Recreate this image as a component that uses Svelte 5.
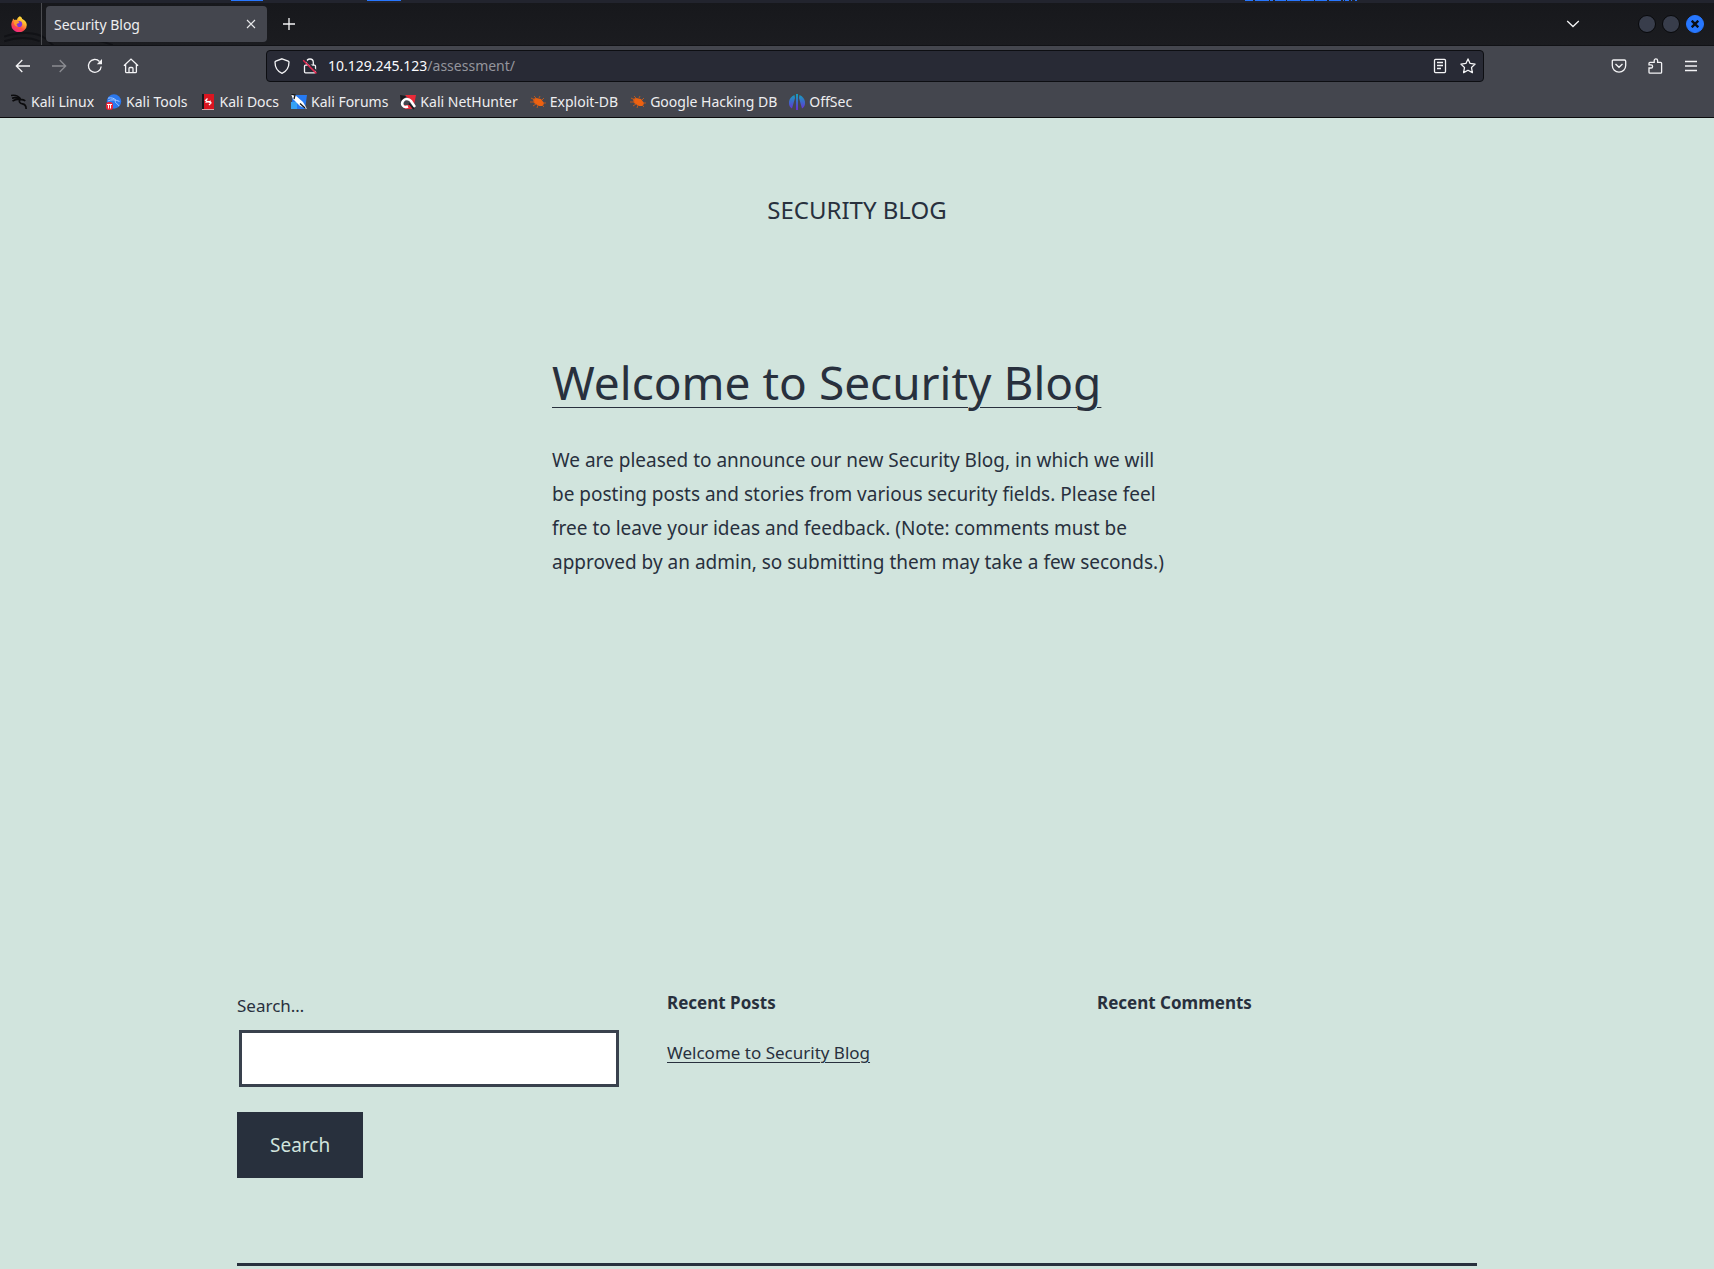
<script>
  const bookmarks = [
    { label: 'Kali Linux', icon: 'dragon' },
    { label: 'Kali Tools', icon: 'tools' },
    { label: 'Kali Docs', icon: 'docs' },
    { label: 'Kali Forums', icon: 'forums' },
    { label: 'Kali NetHunter', icon: 'nethunter' },
    { label: 'Exploit-DB', icon: 'bug' },
    { label: 'Google Hacking DB', icon: 'bug' },
    { label: 'OffSec', icon: 'offsec' }
  ];
  let query = $state('');
  let address = $state('10.129.245.123/assessment/');
  let host = $derived(address.split('/')[0]);
  let path = $derived(address.slice(host.length));
</script>

<div class="browser">
  <header class="chrome">
    <div class="desktop-strip" aria-hidden="true">
      <svg width="100%" height="3">
        <rect width="100%" height="3" fill="#22242e" />
        <path fill="#2777ff" d="M231 0h32v1h-32zM367 0h34v1h-34zM1245 0h8v1h-8zM1255 0h14v1h-14zM1270 0h3v1h-3zM1275 0h11v1h-11zM1287 0h13v1h-13zM1301 0h13v1h-13zM1315 0h12v1h-12zM1329 0h12v1h-12zM1343 0h1v1h-1zM1345 0h4v1h-4zM1351 0h1v1h-1zM1355 0h2v1h-2z" />
      </svg>
    </div>
    <div class="tabs">
      <div class="brand">
        <svg width="16" height="16" viewBox="0 0 16 16" aria-hidden="true">
          <defs>
            <linearGradient id="fx" x1=".8" y1="0" x2=".25" y2="1">
              <stop offset="0" stop-color="#fff04a" /><stop offset=".35" stop-color="#ffb62c" />
              <stop offset=".65" stop-color="#ff5040" /><stop offset="1" stop-color="#f0218e" />
            </linearGradient>
          </defs>
          <path fill="url(#fx)" d="M8.8.2c1.400.6 2 1.500 2.400 2.700C12.800 3.500 15.800 5.600 15.800 9A7.700 7.200 0 0 1 .3 9C.2 6.800 1.200 5.200 1.700 4.300L2 2.400 3.500 4.100C4.600 3.700 5.500 3.700 6 4 6.200 2.200 7.300 1 8.800.2z" />
          <circle cx="8.100" cy="8" r="3.100" fill="#8235dc" />
          <path fill="#ff9a2c" d="M3 5.200C4.700 3.900 6.500 4.600 8.400 6L7.900 7.100 6 7.800C5 8.900 6 10 7.400 10.200 4.800 11.400 2.400 8.500 3 5.200z" />
        </svg>
      </div>
      <div class="tab">
        <span>Security Blog</span>
        <button class="icon close-tab" aria-label="Close tab">
          <svg width="10" height="10" viewBox="0 0 10 10"><path d="M1 1l8 8M9 1L1 9" stroke="#e8e8ea" stroke-width="1.100" /></svg>
        </button>
      </div>
      <button class="icon new-tab" aria-label="New tab">
        <svg width="12" height="12" viewBox="0 0 12 12"><path d="M6 0v12M0 6h12" stroke="#f4f4f6" stroke-width="1.300" /></svg>
      </button>
      <div class="window">
        <button class="icon all-tabs" aria-label="List all tabs">
          <svg width="14" height="8" viewBox="0 0 14 8"><path d="M1.200 1L7 6.500 12.800 1" fill="none" stroke="#f4f4f6" stroke-width="1.300" /></svg>
        </button>
        <button class="dot" aria-label="Minimize"></button>
        <button class="dot" aria-label="Maximize"></button>
        <button class="dot shut" aria-label="Close window">
          <svg width="8" height="8" viewBox="0 0 8 8"><path d="M.7.7l6.600 6.600M7.300.7L.7 7.300" stroke="#0a0d16" stroke-width="2.400" /></svg>
        </button>
      </div>
      <svg class="swirl" width="130" height="46" viewBox="0 0 130 46" aria-hidden="true">
        <path d="M0 37C14 32 34 31 44 39l9 8M0 42c12-4 26-5 38 0M84 40c12 0 22 2 32 6" fill="none" stroke="#111216" stroke-width="2" />
      </svg>
    </div>

    <nav class="toolbar" aria-label="Navigation">
      <div class="nav-buttons">
        <button class="icon" aria-label="Back">
          <svg width="16" height="16" viewBox="0 0 16 16"><path d="M15 8H1.500M7.300 2L1.300 8l6 6" /></svg>
        </button>
        <button class="icon faded" aria-label="Forward">
          <svg width="16" height="16" viewBox="0 0 16 16"><path d="M1 8h13.500M8.700 2l6 6-6 6" /></svg>
        </button>
        <button class="icon" aria-label="Reload">
          <svg width="16" height="16" viewBox="0 0 16 16"><path d="M14.200 8.500A6.400 6.400 0 1 1 12.500 3.500" /><path class="solid" d="M15 1v5.200H9.800z" /></svg>
        </button>
        <button class="icon" aria-label="Home">
          <svg width="16" height="16" viewBox="0 0 16 16"><path d="M.9 7.800L8 1.100l7.100 6.700M2.600 6.500v7.200c0 .7.300 1 1 1h8.800c.7 0 1-.3 1-1V6.500M6 14.500v-4c0-.7.300-1 1-1h2c.7 0 1 .3 1 1v4" /></svg>
        </button>
      </div>

      <div class="urlbar">
        <div class="badges">
          <button class="icon" aria-label="Tracking protection">
            <svg width="16" height="16" viewBox="0 0 16 16"><path d="M8 .8l6.200 2.300c.5.200.8.500.8 1C15 9.500 12.500 13.500 8 15.300 3.500 13.500 1 9.500 1 4.100c0-.5.300-.8.800-1z" /></svg>
          </button>
          <button class="icon" aria-label="Connection not secure">
            <svg width="16" height="16" viewBox="0 0 16 16"><path d="M4.700 7V4.300a3.300 3.300 0 0 1 6.600 0V7M3.500 7.200h9c.7 0 1 .3 1 1v5.600c0 .7-.3 1-1 1h-9c-.7 0-1-.3-1-1V8.200c0-.7.300-1 1-1z" /><path class="gap" d="M3 1.500l12 12" /><path class="slash" d="M1.200 2.200L14.400 15.400" /></svg>
          </button>
        </div>
        <label class="address">
          <span class="address-text" aria-hidden="true"><b>{host}</b>{path}</span>
          <input type="text" bind:value={address} aria-label="Address" />
        </label>
        <div class="badges">
          <button class="icon" aria-label="Reader view">
            <svg width="16" height="16" viewBox="0 0 16 16"><path d="M3.500 1.400h9c.7 0 1 .3 1 1v11.200c0 .7-.3 1-1 1h-9c-.7 0-1-.3-1-1V2.400c0-.7.300-1 1-1zM5 4.500h6M5 7.500h6M5 10.500h4" /></svg>
          </button>
          <button class="icon" aria-label="Bookmark this page">
            <svg width="16" height="16" viewBox="0 0 16 16"><path stroke-linejoin="round" d="M8 .9l2.100 4.500 5 .7-3.600 3.400.9 5.100L8 12.200l-4.400 2.400.9-5.100L.9 6.100l5-.7z" /></svg>
          </button>
        </div>
      </div>

      <div class="actions">
        <button class="icon" aria-label="Save to Pocket">
          <svg width="16" height="16" viewBox="0 0 16 16"><path d="M2.500 2h11c.8 0 1.200.4 1.200 1.200V7.500a6.700 6.700 0 0 1-13.400 0V3.200C1.300 2.400 1.700 2 2.500 2zM4.500 6l3.500 3.300L11.500 6" /></svg>
        </button>
        <button class="icon" aria-label="Extensions">
          <svg width="16" height="16" viewBox="0 0 16 16"><path d="M2 10h2a1.600 1.600 0 0 0 0-3.200H2V5.300c0-.7.300-1 1-1h4.200V2.600a1.700 1.700 0 0 1 3.400 0v1.700h3c.7 0 1 .3 1 1v8.900c0 .6-.3.900-1 .9H3c-.7 0-1-.3-1-.9z" /></svg>
        </button>
        <button class="icon" aria-label="Open application menu">
          <svg width="16" height="16" viewBox="0 0 16 16"><path d="M2 3.500h12M2 8h12M2 12.500h12" /></svg>
        </button>
      </div>
    </nav>

    <nav class="bookmarks" aria-label="Bookmarks">
      {#each bookmarks as b}
        <a href="#top">
          <svg width="16" height="16" viewBox="0 0 16 16" aria-hidden="true">
            {#if b.icon === 'dragon'}
              <path d="M0 1.500c4-.8 7.500.6 9.500 3.300M1 4.200c3-.9 6-.4 8.500 1M1.500 7C4 5.500 7 5 9.500 5.300c2 .2 3.500.5 4.800 1.500M9 5.300C7.500 7.800 9 9.500 11.500 9.800c2.500.4 3.700 2 3.600 5.200" fill="none" stroke="#0b0b0d" stroke-width="1.700" />
            {:else if b.icon === 'tools'}
              <circle cx="8" cy="7.500" r="7.200" fill="#2b78ee" />
              <path d="M2 4.200c3.500-1 6.500.2 8 2.200M2 7c3-1.800 7-1.400 11.500.4M9.500 6.500c-1 3 2 2.700 3.500 5.500" fill="none" stroke="#a9ccff" stroke-width="1" />
              <rect y="8" width="7" height="8" rx="3" fill="#ee2636" />
              <path d="M1 10.500h5M2.500 10.500v4M4.500 10.500v4" stroke="#fff" stroke-width="1" />
            {:else if b.icon === 'docs'}
              <path d="M2 0h12v16H2z" fill="#db1520" /><path d="M2 0h2v15H2z" fill="#16181d" />
              <path d="M2 15h12v1H2z" fill="#d9a6a8" />
              <path d="M7.500 4.500L5.500 6.500 8 8l3-1M5.500 8.500L8 7.500l3 1.500-2 2" fill="none" stroke="#fff" stroke-width="1.200" />
            {:else if b.icon === 'forums'}
              <path d="M2 1h14l-2 14H0z" fill="#267af2" /><path d="M0 8h6v7H0z" fill="#35a1f4" />
              <path d="M0 0l4 1 8 7 4 7-7-3-7-7z" fill="#fff" />
              <path d="M0 0l4 1-1 4M9 9.500l5 4.500" fill="none" stroke="#17191e" stroke-width="1.400" />
            {:else if b.icon === 'nethunter'}
              <path d="M5 1h11l-2 10-6-7z" fill="#e92a38" /><path d="M0 1l6 1-5 8z" fill="#17191e" />
              <path d="M5 15l-3-4h9l1 4z" fill="#e92a38" />
              <path d="M8 12.500C3 14.500 1 10 3 7c2-3 6-2.500 8 0l4 6" fill="none" stroke="#fff" stroke-width="2.600" />
              <path d="M9 9.500l5 5.500" stroke="#17191e" stroke-width="1.500" />
            {:else if b.icon === 'bug'}
              <path d="M3 5l3-1 5 1 3 4-1 3-4 0-5-3z" fill="#ed6110" />
              <path d="M1 4l4 2M4 2l2 2M9 4l1-2M0 8l5 0M3 12l3-2M7 14l1-3M12 6l2-2M13 9l3 0M12 11l2 2" stroke="#c65a1c" stroke-width=".9" />
            {:else}
              <defs><linearGradient id="os" x1="0" y1="0" x2="0" y2="1"><stop stop-color="#12a4bd" /><stop offset="1" stop-color="#6a2bd6" /></linearGradient></defs>
              <path fill="url(#os)" d="M5.500 1C-2 4-1 13 3 14.500L6 4zM7 0h2v16H7zM10.500 1C18 4 17 13 13 14.500L10 4z" />
            {/if}
          </svg>
          <span>{b.label}</span>
        </a>
      {/each}
    </nav>
  </header>

  <div class="page" id="top">
    <div class="site-header"><a href="#top">Security Blog</a></div>
    <main>
      <h1><a href="#top">Welcome to Security Blog</a></h1>
      <p>
        We are pleased to announce our new Security Blog, in which we will be posting posts and
        stories from various security fields. Please feel free to leave your ideas and feedback.
        (Note: comments must be approved by an admin, so submitting them may take a few seconds.)
      </p>
    </main>
    <aside class="widgets">
      <form onsubmit={(e) => e.preventDefault()}>
        <label for="search">Search…</label>
        <input id="search" type="search" bind:value={query} />
        <button type="submit">Search</button>
      </form>
      <section>
        <h2>Recent Posts</h2>
        <ul><li><a href="#top">Welcome to Security Blog</a></li></ul>
      </section>
      <section>
        <h2>Recent Comments</h2>
      </section>
    </aside>
    <footer></footer>
  </div>
</div>

<style>
  :global(body) {
    background: #d1e4dd;
  }
  .browser {
    font-family: 'Noto Sans', sans-serif;
    color: #28303d;
  }
  button,
  input {
    font: inherit;
    border: 0;
    padding: 0;
    margin: 0;
    background: none;
    box-sizing: border-box;
  }
  a {
    color: inherit;
  }
  .chrome {
    background: #44464e;
    color: #eeeef0;
    font-size: 14px;
    border-bottom: 1px solid #0c0c0e;
  }
  .desktop-strip {
    height: 3px;
    overflow: hidden;
  }
  .desktop-strip svg {
    display: block;
  }
  .icon {
    display: flex;
    align-items: center;
    justify-content: center;
  }
  .tabs {
    position: relative;
    display: flex;
    height: 43px;
    box-sizing: border-box;
    align-items: center;
    background: linear-gradient(#17181c, #1b1c20);
    border-bottom: 1px solid #111216;
  }
  .swirl {
    position: absolute;
    left: 0;
    bottom: 0;
    height: 43px;
  }
  .brand {
    z-index: 1;
    display: flex;
    align-items: center;
    height: 100%;
    padding: 0 14px 0 11px;
    border-right: 1px solid #4b4c50;
  }
  .tab {
    z-index: 1;
    display: flex;
    align-items: center;
    justify-content: space-between;
    width: 221px;
    height: 36px;
    box-sizing: border-box;
    margin-left: 4px;
    padding: 0 11px 0 8px;
    border-radius: 4px;
    background: #44464e;
  }
  .new-tab {
    margin-left: 16px;
  }
  .window {
    display: flex;
    align-items: center;
    gap: 6px;
    margin-left: auto;
    padding-right: 10px;
  }
  .all-tabs {
    margin-right: 52px;
  }
  .dot {
    width: 18px;
    height: 18px;
    border: 1px solid #08090b;
    border-radius: 50%;
    background: #383d4b;
  }
  .shut {
    display: flex;
    align-items: center;
    justify-content: center;
    border-color: #2777ff;
    background: #2777ff;
  }
  .toolbar {
    display: grid;
    grid-template-columns: 266px 1fr 230px;
    align-items: center;
    height: 40px;
  }
  .toolbar svg {
    fill: none;
    stroke: #f4f4f6;
    stroke-width: 1.3;
  }
  .toolbar .solid {
    fill: #f4f4f6;
    stroke: none;
  }
  .toolbar .gap {
    stroke: #282a35;
    stroke-width: 1.5;
  }
  .toolbar .slash {
    stroke: #e22850;
    stroke-width: 1.5;
  }
  .faded {
    opacity: 0.4;
  }
  .nav-buttons,
  .actions {
    display: flex;
    gap: 20px;
    padding: 0 15px;
  }
  .actions {
    justify-content: flex-end;
  }
  .urlbar {
    display: flex;
    align-items: center;
    gap: 10px;
    height: 32px;
    box-sizing: border-box;
    padding: 0 7px;
    border: 1px solid #0d0e12;
    border-radius: 4px;
    background: #282a35;
  }
  .badges {
    display: flex;
    gap: 12px;
  }
  .address {
    position: relative;
    flex: 1;
    display: flex;
    align-items: center;
    height: 30px;
    line-height: 30px;
  }
  .address-text {
    color: #94959c;
  }
  .address-text b {
    font-weight: 400;
    color: #fbfbfe;
  }
  .address input {
    position: absolute;
    inset: 0;
    width: 100%;
    color: transparent;
    caret-color: #fbfbfe;
  }
  .bookmarks {
    display: flex;
    align-items: center;
    gap: 12px;
    height: 31px;
    padding: 0 11px;
  }
  .bookmarks a {
    display: flex;
    align-items: center;
    gap: 4px;
    line-height: 20px;
    text-decoration: none;
    white-space: nowrap;
  }
  .page {
    box-sizing: border-box;
    max-width: 1240px;
    margin: 0 auto;
    padding-top: 72px;
  }
  .site-header {
    font-size: 24px;
    line-height: 40px;
    text-align: center;
    text-transform: uppercase;
  }
  .site-header a {
    text-decoration: none;
  }
  main {
    max-width: 610px;
    margin: 0 auto;
    padding: 120px 0 412px;
  }
  h1 {
    margin: 0;
    font-size: 46px;
    font-weight: 400;
    line-height: 64px;
  }
  h1 a,
  li a {
    text-decoration: underline 1px;
    text-underline-offset: 3px;
  }
  h1 a {
    text-underline-offset: 7px;
  }
  p {
    margin: 29px -12px 0 0;
    font-size: 19px;
    line-height: 34px;
  }
  .widgets {
    display: grid;
    grid-template-columns: repeat(3, 1fr);
    gap: 50px;
    font-size: 17px;
    line-height: 30px;
  }
  form {
    display: flex;
    flex-direction: column;
    align-items: flex-start;
  }
  form input {
    width: 100%;
    height: 57px;
    margin: 9px 2px 25px;
    padding: 10px;
    border: 3px solid #39414d;
    background: #fff;
  }
  form button {
    padding: 16px 33px;
    background: #28303d;
    color: #d1e4dd;
    font-size: 19px;
    line-height: 34px;
  }
  h2 {
    margin: 0;
    font-size: 17px;
    font-weight: 700;
    line-height: 24px;
  }
  ul {
    margin: 23px 0 0;
    padding: 0;
    list-style: none;
  }
  footer {
    margin-top: 85px;
    border-top: 3px solid #28303d;
  }
</style>
